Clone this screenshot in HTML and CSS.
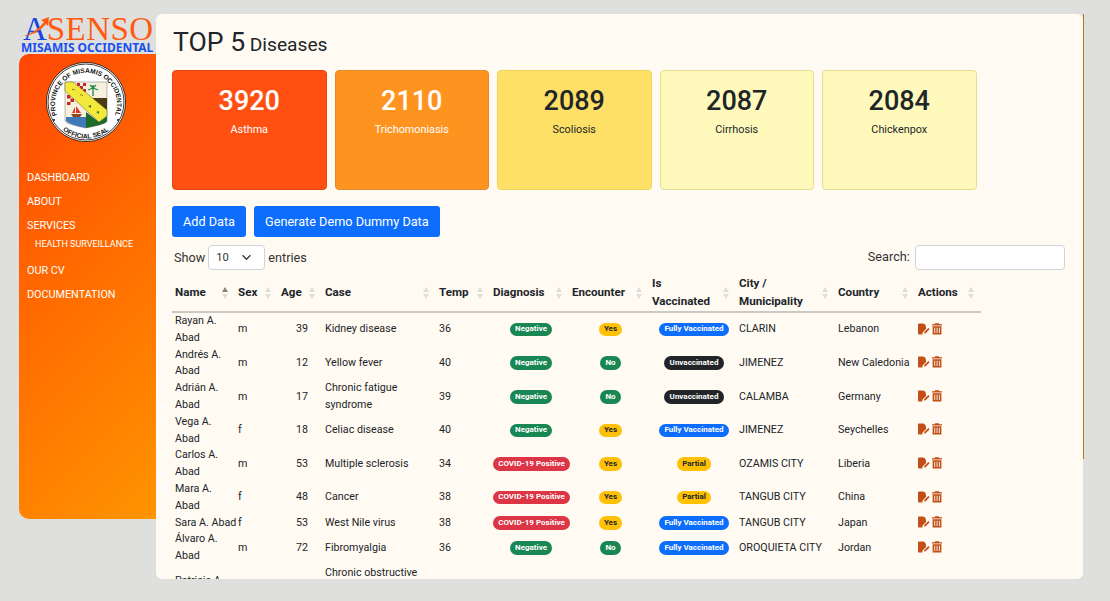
FILE: index.html
```html
<!DOCTYPE html>
<html lang="en">
<head>
  <meta charset="UTF-8" />
  <title>Asenso - Top 5 Diseases</title>
  <link rel="stylesheet" href="styles.css">
</head>
<body>
  <svg class="defs" width="0" height="0">
    <symbol id="ico-edit" viewBox="0 0 12 12">
      <path d="M0 1.5Q0 .5 1 .5H4.6Q7.6 .5 8 4.2L8 6 4.6 9.6 4.3 11.5H1Q0 11.5 0 10.5Z" fill="#c14f17"/>
      <path d="M6 10.6 6.4 8.9 10.3 5 11.6 6.3 7.7 10.2Z" fill="#c14f17"/>
    </symbol>
    <symbol id="ico-trash" viewBox="0 0 10 12">
      <path d="M3.2 .2H6.8L7.4 1.2H10V2.4H0V1.2H2.6Z" fill="#c14f17"/>
      <path d="M.6 3.2H9.4V11.6H.6ZM2.3 4.8V10H3.2V4.8ZM4.6 4.8V10H5.5V4.8ZM6.9 4.8V10H7.8V4.8Z" fill="#c14f17" fill-rule="evenodd"/>
    </symbol>
  </svg>

  <div class="page">
    <!-- LEFT -->
    <aside class="side">
      <div class="logo">
        <div class="logo-top">
          <span class="logo-a">A</span><span class="logo-rest">SENSO</span>
          <svg class="swoosh" viewBox="0 0 26 20"><path d="M0 19Q13 16 21 5L18 3 26 0 25 9 23 7Q14 18 0 19Z" fill="#ff5a12"/></svg>
        </div>
        <div class="logo-sub">MISAMIS OCCIDENTAL</div>
      </div>
      <nav class="nav">
        <svg class="seal" viewBox="0 0 80 80">
          <defs>
            <path id="arc-top" d="M13.8 58.4A31 31 0 1 1 66.2 58.4"/>
            <path id="arc-low" d="M12.5 64A36.5 36.5 0 0 0 67.5 64"/>
          </defs>
          <circle cx="40" cy="40" r="39.6" fill="#fff" stroke="#111" stroke-width=".8"/>
          <circle cx="40" cy="40" r="38" fill="none" stroke="#111" stroke-width=".8"/>
          <text class="seal-text" text-anchor="middle"><textPath href="#arc-top" startOffset="50%">PROVINCE OF MISAMIS OCCIDENTAL</textPath></text>
          <text class="seal-text" text-anchor="middle"><textPath href="#arc-low" startOffset="50%">OFFICIAL SEAL</textPath></text>
          <circle cx="8" cy="58" r="1" fill="#111"/>
          <circle cx="72" cy="58" r="1" fill="#111"/>
          <path d="M19 20H61V59Q61 62 40 66Q19 62 19 59Z" fill="#f6f0dc" stroke="#777" stroke-width=".5"/>
          <path d="M31 21h3v3h-3zM37 21h3v3h-3zM34 24h3v3h-3zM37 27h3v3h-3zM21 33h3.500v3.500h-3.500zM28 33h3.500v3.500h-3.500zM24.500 36.500h3.500v3.500h-3.500zM21 40h3.500v3h-3.500z" fill="#c8242b"/>
          <path d="M20 55H40V66Q24 63 20 59Z" fill="#3f79b8"/>
          <path d="M40 50 53 60 61 54V59Q61 62 40 66Z" fill="#1d6a2c"/>
          <path d="M42 36H61V47H56Z" fill="#4b3a12"/>
          <path d="M52 47H61V54L57 51Z" fill="#3f8fc0"/>
          <path d="M25 52H36L34 55H27Z" fill="#8a4a22"/>
          <path d="M30 44 35 51H30ZM29 45V51H26Z" fill="#d9372b"/>
          <path d="M47 34V26M47 26l-5 2M47 26l5 2M47 26l-3-3M47 26l3-3M47 26l0-3" stroke="#1f8a4c" stroke-width="1.300" fill="none"/>
          <path d="M19 20H27L61 48V54L53 60 19 29Z" fill="#f2e93a" stroke="#333" stroke-width=".4"/>
          <path d="M26 27.500q2 -1 3 1M34 33q2 -1 3 1" stroke="#7b7a20" stroke-width="1" fill="none"/>
          <path d="M42 44l3 -1 0 3ZM50 50l3 -1 0 3Z" fill="#2f7a2f"/>
        </svg>
        <a class="nav-link" href="#">DASHBOARD</a>
        <a class="nav-link" href="#">ABOUT</a>
        <a class="nav-link" href="#">SERVICES</a>
        <a class="nav-sub" href="#">HEALTH SURVEILLANCE</a>
        <a class="nav-link" href="#">OUR CV</a>
        <a class="nav-link" href="#">DOCUMENTATION</a>
      </nav>
    </aside>

    <!-- RIGHT -->
    <main class="panel">
      <h1 class="title">TOP 5 <small>Diseases</small></h1>

      <div class="cards">
        <div class="card c1"><b>3920</b><span>Asthma</span></div>
        <div class="card c2"><b>2110</b><span>Trichomoniasis</span></div>
        <div class="card c3"><b>2089</b><span>Scoliosis</span></div>
        <div class="card c4"><b>2087</b><span>Cirrhosis</span></div>
        <div class="card c5"><b>2084</b><span>Chickenpox</span></div>
      </div>

      <div class="actions-bar">
        <button class="btn">Add Data</button>
        <button class="btn">Generate Demo Dummy Data</button>
      </div>

      <div class="dt-top">
        <label class="dt-len">Show
          <span class="fake-select">10
            <svg viewBox="0 0 12 8" width="11" height="7"><path d="M1.5 1.5 6 6l4.5-4.5" fill="none" stroke="#343a40" stroke-width="1.5"/></svg>
          </span>
          entries</label>
        <label class="dt-search">Search: <input type="text"></label>
      </div>

      <table class="dt">
        <colgroup>
          <col class="w-name"><col class="w-sex"><col class="w-age"><col class="w-case"><col class="w-temp"><col class="w-diag"><col class="w-enc"><col class="w-vac"><col class="w-city"><col class="w-country"><col class="w-act">
        </colgroup>
        <thead>
          <tr>
            <th class="sorted">Name</th><th>Sex</th><th>Age</th><th>Case</th><th>Temp</th><th>Diagnosis</th><th>Encounter</th><th>Is Vaccinated</th><th>City / Municipality</th><th>Country</th><th>Actions</th>
          </tr>
        </thead>
        <tbody>
          <tr><td>Rayan A. Abad</td><td>m</td><td class="num">39</td><td>Kidney disease</td><td>36</td><td class="mid"><i class="bdg green">Negative</i></td><td class="mid"><i class="bdg yellow">Yes</i></td><td class="mid"><i class="bdg blue">Fully Vaccinated</i></td><td>CLARIN</td><td>Lebanon</td><td class="ico"><svg class="i-edit"><use href="#ico-edit"/></svg><svg class="i-del"><use href="#ico-trash"/></svg></td></tr>
          <tr><td>Andrés A. Abad</td><td>m</td><td class="num">12</td><td>Yellow fever</td><td>40</td><td class="mid"><i class="bdg green">Negative</i></td><td class="mid"><i class="bdg green">No</i></td><td class="mid"><i class="bdg dark">Unvaccinated</i></td><td>JIMENEZ</td><td>New Caledonia</td><td class="ico"><svg class="i-edit"><use href="#ico-edit"/></svg><svg class="i-del"><use href="#ico-trash"/></svg></td></tr>
          <tr><td>Adrián A. Abad</td><td>m</td><td class="num">17</td><td>Chronic fatigue syndrome</td><td>39</td><td class="mid"><i class="bdg green">Negative</i></td><td class="mid"><i class="bdg green">No</i></td><td class="mid"><i class="bdg dark">Unvaccinated</i></td><td>CALAMBA</td><td>Germany</td><td class="ico"><svg class="i-edit"><use href="#ico-edit"/></svg><svg class="i-del"><use href="#ico-trash"/></svg></td></tr>
          <tr><td>Vega A. Abad</td><td>f</td><td class="num">18</td><td>Celiac disease</td><td>40</td><td class="mid"><i class="bdg green">Negative</i></td><td class="mid"><i class="bdg yellow">Yes</i></td><td class="mid"><i class="bdg blue">Fully Vaccinated</i></td><td>JIMENEZ</td><td>Seychelles</td><td class="ico"><svg class="i-edit"><use href="#ico-edit"/></svg><svg class="i-del"><use href="#ico-trash"/></svg></td></tr>
          <tr><td>Carlos A. Abad</td><td>m</td><td class="num">53</td><td>Multiple sclerosis</td><td>34</td><td class="mid"><i class="bdg red">COVID-19 Positive</i></td><td class="mid"><i class="bdg yellow">Yes</i></td><td class="mid"><i class="bdg yellow">Partial</i></td><td>OZAMIS CITY</td><td>Liberia</td><td class="ico"><svg class="i-edit"><use href="#ico-edit"/></svg><svg class="i-del"><use href="#ico-trash"/></svg></td></tr>
          <tr><td>Mara A. Abad</td><td>f</td><td class="num">48</td><td>Cancer</td><td>38</td><td class="mid"><i class="bdg red">COVID-19 Positive</i></td><td class="mid"><i class="bdg yellow">Yes</i></td><td class="mid"><i class="bdg yellow">Partial</i></td><td>TANGUB CITY</td><td>China</td><td class="ico"><svg class="i-edit"><use href="#ico-edit"/></svg><svg class="i-del"><use href="#ico-trash"/></svg></td></tr>
          <tr><td class="one-line">Sara A. Abad</td><td>f</td><td class="num">53</td><td>West Nile virus</td><td>38</td><td class="mid"><i class="bdg red">COVID-19 Positive</i></td><td class="mid"><i class="bdg yellow">Yes</i></td><td class="mid"><i class="bdg blue">Fully Vaccinated</i></td><td>TANGUB CITY</td><td>Japan</td><td class="ico"><svg class="i-edit"><use href="#ico-edit"/></svg><svg class="i-del"><use href="#ico-trash"/></svg></td></tr>
          <tr><td>Álvaro A. Abad</td><td>m</td><td class="num">72</td><td>Fibromyalgia</td><td>36</td><td class="mid"><i class="bdg green">Negative</i></td><td class="mid"><i class="bdg green">No</i></td><td class="mid"><i class="bdg blue">Fully Vaccinated</i></td><td>OROQUIETA CITY</td><td>Jordan</td><td class="ico"><svg class="i-edit"><use href="#ico-edit"/></svg><svg class="i-del"><use href="#ico-trash"/></svg></td></tr>
          <tr><td>Patricia A. Abad</td><td>f</td><td class="num">29</td><td>Chronic obstructive pulmonary disease (COPD)</td><td>37</td><td class="mid"><i class="bdg green">Negative</i></td><td class="mid"><i class="bdg green">No</i></td><td class="mid"><i class="bdg blue">Fully Vaccinated</i></td><td>CLARIN</td><td>Peru</td><td class="ico"><svg class="i-edit"><use href="#ico-edit"/></svg><svg class="i-del"><use href="#ico-trash"/></svg></td></tr>
        </tbody>
      </table>
    </main>
    <div class="edge"></div>
  </div>
</body>
</html>
```

FILE: styles.css
```css
html, body {
  height: 100%;
}

body {
  background-color: #dfdfdd;
  color: #212529;
  font-family: Roboto, sans-serif;
  margin: 0;
  overflow: hidden;
}

.defs {
  display: block;
  height: 0;
}

.page {
  display: flex;
  align-items: flex-start;
  padding: 14px 0 0 19px;
}

/* sidebar */
.side {
  width: 137px;
  flex: none;
}

.logo {
  height: 40px;
}

.logo-top {
  position: relative;
  height: 27px;
  padding-left: 4px;
  font-family: "Liberation Serif", serif;
  font-size: 33px;
  line-height: 30px;
  letter-spacing: 0.4px;
  white-space: nowrap;
}

.logo-a {
  color: #1746e0;
  letter-spacing: 0;
}

.logo-rest {
  color: #ff5a12;
}

.swoosh {
  position: absolute;
  left: 4px;
  top: 3px;
  width: 26px;
  height: 20px;
}

.logo-sub {
  color: #1a4ff0;
  font-family: "Noto Sans", sans-serif;
  font-size: 12px;
  font-weight: 700;
  line-height: 13px;
  padding-left: 2px;
  white-space: nowrap;
}

.nav {
  display: flex;
  flex-direction: column;
  height: 465px;
  box-sizing: border-box;
  padding: 8px 0 0 8px;
  border-radius: 10px 0 0 10px;
  background: linear-gradient(135deg, #ff4605 0%, #ff6a00 45%, #ff9400 100%);
}

.seal {
  width: 80px;
  height: 80px;
  margin: 0 0 28px 19px;
  flex: none;
}

.seal-text {
  font-family: "Liberation Sans", sans-serif;
  font-size: 6.6px;
  font-weight: 700;
  fill: #111;
}

.nav-link {
  color: #fff;
  font-size: 10.8px;
  line-height: 16px;
  margin-bottom: 8px;
  text-decoration: none;
}

.nav-sub {
  color: #fff;
  font-size: 9px;
  line-height: 14px;
  margin: -5px 0 12px 8px;
  text-decoration: none;
}

/* main panel */
.panel {
  width: 927px;
  height: 565px;
  flex: none;
  box-sizing: border-box;
  padding: 0 18px 0 16px;
  overflow: hidden;
  background-color: #fffaf2;
  border-radius: 6px;
}

.edge {
  width: 1px;
  height: 445px;
  flex: none;
  background-color: #b5781f;
}

.title {
  font-size: 26.6px;
  font-weight: 400;
  line-height: 34px;
  margin: 11px 0 8px 1px;
}

.title small {
  font-size: 19.2px;
  margin-left: -2px;
}

.cards {
  display: flex;
  gap: 8px;
}

.card {
  width: 154.5px;
  height: 120px;
  flex: none;
  box-sizing: border-box;
  border: 1px solid;
  border-radius: 4px;
  text-align: center;
  padding-top: 11px;
}

.card b {
  display: block;
  font-size: 27px;
  font-weight: 500;
  line-height: 38px;
}

.card span {
  display: block;
  font-size: 10.8px;
  line-height: 17px;
  margin-top: 1px;
}

.c1 { background: #ff5012; border-color: #e0481a; color: #fff; }
.c2 { background: #ff9320; border-color: #e58a2a; color: #fff; }
.c3 { background: #ffe066; border-color: #f0d25a; }
.c4 { background: #fffabb; border-color: #e6dd95; }
.c5 { background: #fffabb; border-color: #e6dd95; }

.actions-bar {
  display: flex;
  gap: 8px;
  margin-top: 16px;
}

.btn {
  height: 31px;
  padding: 0 11px;
  border: 0;
  border-radius: 3px;
  background-color: #0d6efd;
  color: #fff;
  font-family: Roboto, sans-serif;
  font-size: 12.7px;
}

.dt-top {
  display: flex;
  justify-content: space-between;
  align-items: center;
  height: 25px;
  margin-top: 8px;
  font-size: 12.7px;
  color: #333;
  padding-left: 2px;
}

.dt-len {
  display: flex;
  align-items: center;
  gap: 3px;
}

.fake-select {
  display: flex;
  align-items: center;
  justify-content: space-between;
  width: 57px;
  height: 25px;
  box-sizing: border-box;
  padding: 0 12px 0 7px;
  background: #fff;
  border: 1px solid #ced4da;
  border-radius: 4px;
  font-size: 11.2px;
}

.dt-search input {
  width: 150px;
  height: 25px;
  box-sizing: border-box;
  margin-left: 2px;
  vertical-align: middle;
  background: #fff;
  border: 1px solid #ced4da;
  border-radius: 4px;
}

/* table */
.dt {
  width: 809px;
  margin-top: 4px;
  border-collapse: collapse;
  table-layout: fixed;
  font-size: 10.7px;
  line-height: 16.8px;
}

.w-name { width: 63px; }
.w-sex { width: 43px; }
.w-age { width: 44px; }
.w-case { width: 114px; }
.w-temp { width: 54px; }
.w-diag { width: 79px; }
.w-enc { width: 80px; }
.w-vac { width: 87px; }
.w-city { width: 99px; }
.w-country { width: 80px; }
.w-act { width: 66px; }

.dt th {
  position: relative;
  box-sizing: border-box;
  height: 38px;
  padding: 0 14px 1px 3px;
  border-bottom: 2px solid #c9c8c3;
  font-size: 11.6px;
  font-weight: 700;
  line-height: 18px;
  text-align: left;
}

/* sort arrows */
.dt th::before,
.dt th::after {
  content: "";
  position: absolute;
  right: 7px;
  top: 50%;
  border-left: 3.5px solid transparent;
  border-right: 3.5px solid transparent;
}

.dt th::before {
  margin-top: -6px;
  border-bottom: 5px solid #dfdfda;
}

.dt th::after {
  margin-top: 1px;
  border-top: 5px solid #dfdfda;
}

.dt th.sorted::before {
  border-bottom-color: #85857f;
}

.dt td {
  padding: 0 0 0 3px;
  vertical-align: middle;
}

.dt .one-line {
  white-space: nowrap;
}

.dt .num {
  text-align: right;
  padding-right: 14px;
}

.dt .mid {
  text-align: center;
}

.bdg {
  display: inline-block;
  font-size: 8px;
  font-style: normal;
  font-weight: 700;
  line-height: 8.4px;
  padding: 2.6px 5.2px;
  border-radius: 7px;
  color: #fff;
  vertical-align: middle;
  white-space: nowrap;
}

.green { background: #198754; }
.yellow { background: #ffc107; color: #212529; }
.blue { background: #0d6efd; }
.dark { background: #212529; }
.red { background: #dc3545; }

.ico {
  white-space: nowrap;
}

.ico svg {
  height: 12px;
  margin-bottom: 2px;
  vertical-align: middle;
}

.i-edit {
  width: 12px;
  margin-right: 2px;
}

.i-del {
  width: 10px;
}
```
